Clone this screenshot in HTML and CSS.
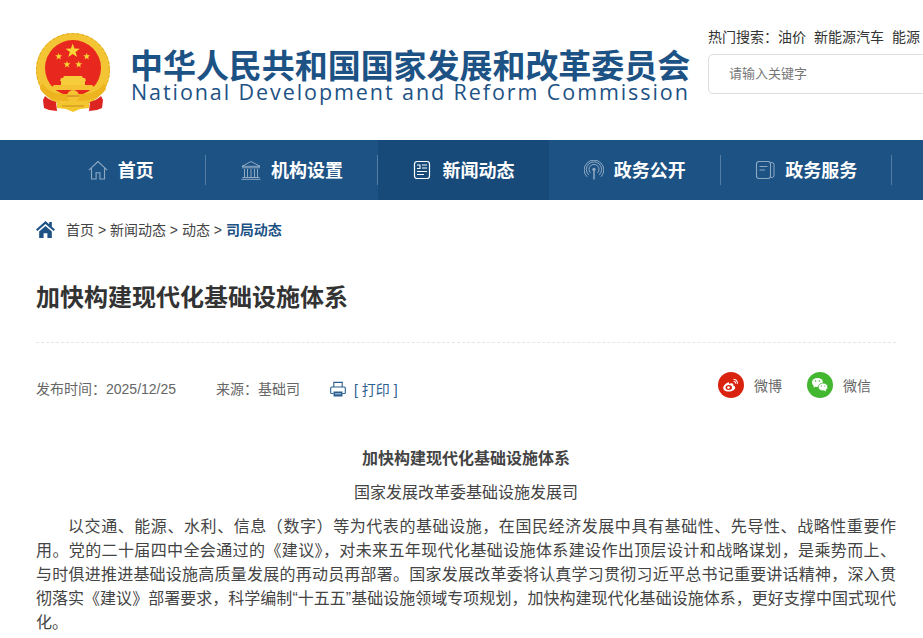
FILE: index.html
```html
<!DOCTYPE html>
<html lang="zh-CN">
<head>
<meta charset="utf-8">
<title>加快构建现代化基础设施体系</title>
<link rel="stylesheet" href="styles.css">
</head>
<body>
<header class="header">
  <a class="logo">
    <svg class="emblem" viewBox="0 0 74 80" width="74" height="80">
      <defs><polygon id="s" points="0,-10 2.350,-3.240 9.510,-3.090 3.800,1.240 5.880,8.090 0,4 -5.880,8.090 -3.800,1.240 -9.510,-3.090 -2.350,-3.240"/></defs>
      <circle cx="37" cy="37" r="37" fill="#f3c534"/>
      <circle cx="37" cy="37" r="36.500" fill="none" stroke="#e2a91e" stroke-width="1" stroke-dasharray="3 2"/>
      <circle cx="37" cy="35" r="28" fill="#e8271f"/>
      <use href="#s" transform="translate(36.700 18) scale(.75)" fill="#f9d535"/>
      <use href="#s" transform="translate(22.700 23.500) scale(.37)" fill="#f9d535"/>
      <use href="#s" transform="translate(50.700 23.500) scale(.37)" fill="#f9d535"/>
      <use href="#s" transform="translate(31 31.500) scale(.37)" fill="#f9d535"/>
      <use href="#s" transform="translate(42.700 31.500) scale(.37)" fill="#f9d535"/>
      <path d="M28 43h18l1 2h2l1 3h-1v4H25v-4h-1l1-3h2z" fill="#f7cd3b"/>
      <path d="M18 52h38l4 4-2 1H16l-2-1z" fill="#f4c232"/>
      <path d="M6 50c5 8 13 11 22 11h18c9 0 17-3 22-11l2 6c-5 8-14 12-24 12H28c-10 0-19-4-24-12z" fill="#eeb420"/>
      <circle cx="37" cy="63" r="6" fill="#f4c232"/>
      <path d="M31 63h12" stroke="#c8861a" stroke-width="1.200"/>
      <path d="M9 63c3 3 7 5 11 6l1 9-8-1-5-2-1-8zM65 63c-3 3-7 5-11 6l-1 9 8-1 5-2 1-8z" fill="#dc2420"/>
      <path d="M21 70h32v5l-9 1-7 3-7-3-9-1z" fill="#f4c62e"/>
      <path d="M26 73h22" stroke="#c98a1b" stroke-width="1"/>
    </svg>
    <div class="logo-text">
      <div class="logo-cn">中华人民共和国国家发展和改革委员会</div>
      <div class="logo-en">National Development and Reform Commission</div>
    </div>
  </a>
  <div class="search-area">
    <div class="hot"><span>热门搜索：</span><span class="hot-list"><a>油价</a><a>新能源汽车</a><a>能源</a></span></div>
    <div class="search-box">请输入关键字</div>
  </div>
</header>

<nav class="nav">
  <div class="nav-inner">
    <a class="nav-item">
      <svg class="nav-icon" viewBox="0 0 20 20"><path d="M0.800 10.200 10 1.500l9.200 8.700M3.500 8.200V19h4.600v-6.200h3.800V19h4.600V8.200" fill="none" stroke="currentColor" stroke-width="1.100"/></svg>
      <span class="nav-label">首页</span>
    </a>
    <a class="nav-item">
      <svg class="nav-icon" viewBox="0 0 20 20"><path d="M1 6.300 10 1.500l9 4.800zM1 7.800h18M3.500 9v8M6.500 9v8M10 9v8M13.500 9v8M16.500 9v8M1.500 17.500h17M0.500 19.300h19" fill="none" stroke="currentColor" stroke-width="1"/></svg>
      <span class="nav-label">机构设置</span>
    </a>
    <a class="nav-item active">
      <svg class="nav-icon bright" viewBox="0 0 20 20"><rect x="2.500" y="1.500" width="15" height="17" rx="2.500" fill="none" stroke="currentColor" stroke-width="1.200"/><path d="M10 5h5M10 8h5M5 5h3v3.500H5M5 11.500h10M5 14.500h7" fill="none" stroke="currentColor" stroke-width="1.100"/></svg>
      <span class="nav-label">新闻动态</span>
    </a>
    <a class="nav-item">
      <svg class="nav-icon" viewBox="0 0 20 20"><path d="M10 11v8.500" stroke="currentColor" stroke-width="1.500" fill="none"/><circle cx="10" cy="9.500" r="1.700" fill="currentColor"/><path d="M6.600 13a5 5 0 1 1 6.800 0M4.800 15a7.600 7.600 0 1 1 10.400 0M3 16.800A9.800 9.800 0 1 1 17 16.800" fill="none" stroke="currentColor" stroke-width="1"/></svg>
      <span class="nav-label">政务公开</span>
    </a>
    <a class="nav-item">
      <svg class="nav-icon" viewBox="0 0 20 20"><path d="M16 2.500c1.500 0 2.800 .6 3 1.500v12c-.2 1-1.500 1.500-3 1.500" fill="none" stroke="currentColor" stroke-width="1"/><rect x="1.500" y="1.500" width="14" height="17" rx="2.500" fill="none" stroke="currentColor" stroke-width="1.100"/><path d="M4.500 6.500h8M4.500 10h5.500" fill="none" stroke="currentColor" stroke-width="1.100"/></svg>
      <span class="nav-label">政务服务</span>
    </a>
  </div>
</nav>

<main class="main">
  <div class="crumbs">
    <svg class="crumb-home" viewBox="0 0 18 16" width="19" height="17"><path d="M9 0 0 8l1.300 1.400L9 2.700l7.700 6.700L18 8l-3-2.700V1h-2.500v2.100zM3 10v6h4.200v-4.500h3.600V16H15v-6L9 4.800z" fill="#1d5285"/></svg>
    <span class="crumb-text">首页 &gt; 新闻动态 &gt; 动态 &gt; <b>司局动态</b></span>
  </div>
  <h1 class="title">加快构建现代化基础设施体系</h1>
  <div class="meta">
    <div class="meta-left">
      <span class="date">发布时间：2025/12/25</span>
      <span class="source">来源：基础司</span>
      <span class="print">
        <svg viewBox="0 0 16 16" width="16" height="16"><path d="M3.800 6V1.400h8.400V6M3.500 12.500H1.500a.8.8 0 0 1-.8-.8V7a1 1 0 0 1 1-1h12.600a1 1 0 0 1 1 1v4.700a.8.8 0 0 1-.8.8h-2" fill="none" stroke="#2b5f8f" stroke-width="1.100"/><path d="M3.500 10.500h9v5h-9z" fill="#2b5f8f"/><path d="M5 12h6v1.500H5z" fill="#8eaac4"/></svg>
        <span>[ 打印 ]</span>
      </span>
    </div>
    <div class="share">
      <span class="share-item">
        <svg viewBox="0 0 26 26" width="26" height="26"><circle cx="13" cy="13" r="13" fill="#d9230f"/><path d="M11 10.200c-3 .6-5.800 3.300-5.800 5.700 0 2.200 2.800 3.700 5.700 3.700 3.600 0 6.300-2 6.300-4 0-1.400-1.300-1.900-2-2.100.6-1.500 0-2.500-2.100-2.300-.9.100-1.700.6-2.100.8z" fill="#fff"/><ellipse cx="10.800" cy="15.500" rx="3.200" ry="2.500" fill="#d9230f"/><circle cx="10.500" cy="15.600" r="1.300" fill="#fff"/><path d="M15.500 7.500c2.500-.4 4.500 1.700 3.700 4.300M15.700 9.500c1.300-.2 2.100.8 1.700 2" fill="none" stroke="#fff" stroke-width="1.100"/></svg>
        <span>微博</span>
      </span>
      <span class="share-item">
        <svg viewBox="0 0 26 26" width="26" height="26"><circle cx="13" cy="13" r="13" fill="#43b72f"/><ellipse cx="10.500" cy="10.500" rx="5.500" ry="4.500" fill="#fff"/><path d="m7 13.500-.6 2.200 2.400-1.300z" fill="#fff"/><ellipse cx="16" cy="15" rx="4.800" ry="3.900" stroke="#43b72f" stroke-width=".8" fill="#fff"/><path d="m18.500 17.500.6 1.900-2.200-1.200z" fill="#fff"/><circle cx="8.500" cy="9" r=".8" fill="#43b72f"/><circle cx="12.500" cy="9" r=".8" fill="#43b72f"/><circle cx="14.500" cy="14" r=".6" fill="#43b72f"/><circle cx="17.700" cy="14" r=".6" fill="#43b72f"/></svg>
        <span>微信</span>
      </span>
    </div>
  </div>
  <article class="article">
    <p class="center sub-a"><strong>加快构建现代化基础设施体系</strong></p>
    <p class="center sub-b">国家发展改革委基础设施发展司</p>
    <p class="para">以交通、能源、水利、信息（数字）等为代表的基础设施，在国民经济发展中具有基础性、先导性、战略性重要作用。党的二十届四中全会通过的《建议》，对未来五年现代化基础设施体系建设作出顶层设计和战略谋划，是乘势而上、<span class="keep">与时俱进</span>推进基础设施高质量发展的再动员再部署。国家发展改革委将认真学习贯彻习近平总书记重要讲话精神，深入贯彻落实《建议》部署要求，科学编制“十五五”基础设施领域专项规划，加快构建现代化基础设施体系，更好支撑中国式现代化。</p>
  </article>
</main>
</body>
</html>
```

FILE: styles.css
```css
* { box-sizing: border-box; }
html, body { margin: 0; padding: 0; overflow: hidden; height: 638px; background: #fff; }
body { font-family: "Liberation Sans", "Noto Sans CJK SC", sans-serif; color: #333; width: 923px; }
a { color: inherit; text-decoration: none; }

.header { display: flex; height: 140px; padding-left: 36px; width: 1200px; }
.logo { display: flex; width: 672px; padding-top: 33px; }
.emblem { flex: none; }
.logo-text { margin-left: 20px; padding-top: 11px; }
.logo-cn { font-family: "Noto Sans CJK SC", sans-serif; font-size: 33px; line-height: 40px; font-weight: 700; color: #1d5285; letter-spacing: -0.05px; white-space: nowrap; }
.logo-en { font-family: "Open Sans", sans-serif; font-size: 21.500px; line-height: 26px; color: #1d5285; letter-spacing: 1.920px; white-space: nowrap; margin-top: -5px; padding-left: 1px; }
.search-area { width: 320px; padding-top: 27px; }
.hot { display: flex; font-size: 14px; line-height: 20px; color: #333; white-space: nowrap; }
.hot-list { display: flex; gap: 8px; }
.search-box { margin-top: 7px; height: 40px; border: 1px solid #ddd; border-radius: 5px; font-size: 13px; line-height: 38px; padding-left: 20px; color: #777; }

.nav { height: 60px; background: #1d5285; }
.nav-inner { display: flex; padding-left: 35px; height: 60px; }
.nav-item { position: relative; width: 171.400px; display: flex; align-items: center; justify-content: center; gap: 10px; font-size: 18px; font-weight: 700; color: #fff; }
.nav-label { position: relative; top: -1px; }
.nav-item::after { content: ""; position: absolute; right: 0; top: 15px; height: 30px; width: 1px; background: rgba(255,255,255,.25); }
.nav-item.active { background: #174a78; }
.nav-item.active::after { display: none; }
.nav-icon { width: 20px; height: 20px; flex: none; color: rgba(255,255,255,.5); }
.nav-icon.bright { color: #fff; }

.main { padding: 0 27px 0 36px; }
.crumbs { display: flex; align-items: center; height: 59px; padding-bottom: 1px; font-size: 14px; color: #444; }
.crumb-home { margin-right: 11px; }
.crumb-text b { color: #1d5285; font-weight: 700; }
.title { margin: 0; height: 84px; padding-top: 22px; font-size: 24px; line-height: 34px; font-weight: 700; color: #333; border-bottom: 1px dashed #e6e6e6; }
.meta { display: flex; justify-content: space-between; height: 104px; padding-top: 26px; font-size: 14px; color: #666; }
.meta-left { display: flex; align-items: center; height: 40px; }
.date { width: 180px; position: relative; top: -1px; }
.source { width: 114px; position: relative; top: -1px; }
.print { display: flex; align-items: center; gap: 8px; color: #2b5f8f; }
.share { display: flex; margin-right: 25px; gap: 25px; height: 32px; }
.share-item { display: flex; align-items: center; gap: 10px; }
.article { font-size: 16px; line-height: 24px; color: #444; }
.article p { margin: 0; }
.center { text-align: center; }
.article .sub-a { margin-bottom: 10px; }
.article .sub-b { margin-bottom: 10px; }
.para { text-indent: 32px; text-align: justify; }
.keep { white-space: nowrap; }
```
